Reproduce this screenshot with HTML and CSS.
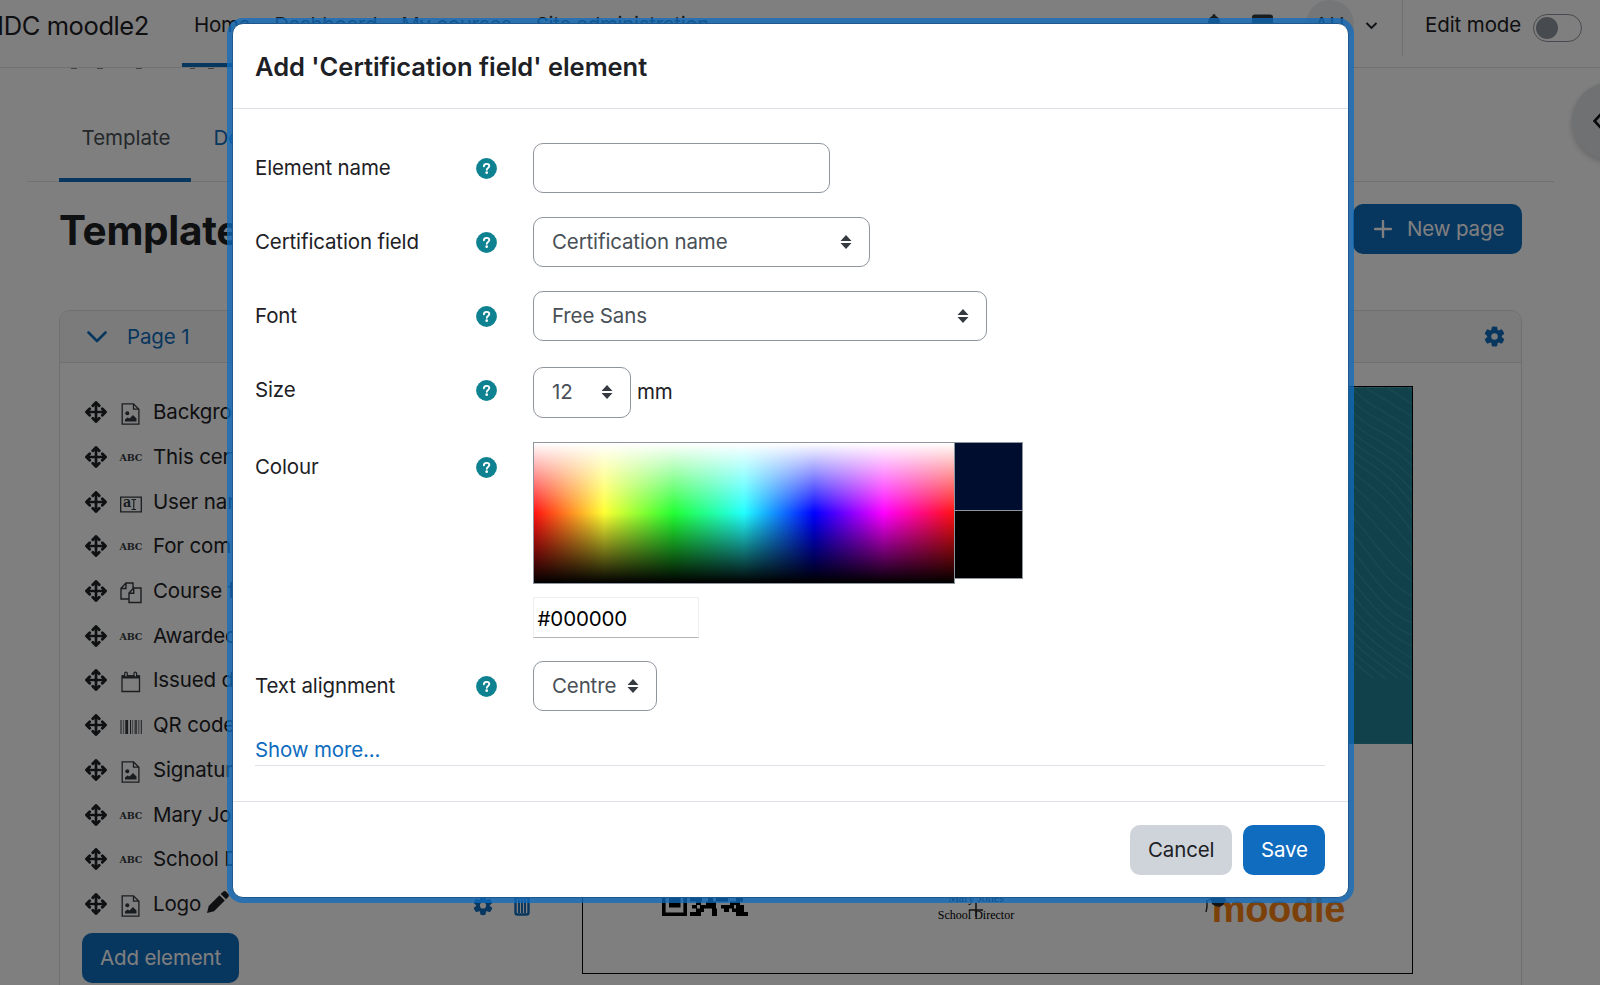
FILE: index.html
```html
<!DOCTYPE html>
<html lang="en">
<head>
<meta charset="utf-8">
<title>MDC moodle2</title>
<link rel="stylesheet" href="styles.css">
</head>
<body>
<svg class="defs" aria-hidden="true">
  <symbol id="move" viewBox="0 0 22 22"><path d="M11 3v16M3 11h16" fill="none" stroke="currentColor" stroke-width="2.7"/><path d="M7.8 4.7 11 1.5l3.200 3.200M7.800 17.300 11 20.500l3.200-3.200M4.700 7.800 1.500 11l3.200 3.200M17.300 7.800 20.500 11l-3.200 3.200" fill="none" stroke="currentColor" stroke-width="2.900" stroke-linecap="round" stroke-linejoin="round"/></symbol>
  <symbol id="image" viewBox="0 0 22 22"><path d="M2.200.800h11.300l5.400 5.400v15H2.200zM13.500.800v5.400h5.400" fill="none" stroke="currentColor" stroke-width="1.300"/><circle cx="7.300" cy="10.200" r="2" fill="currentColor"/><path d="M5 18.500v-2l2.500-2 2 1 3.500-3.500 3.500 3.500v3z" fill="currentColor"/></symbol>
  <symbol id="field" viewBox="0 0 22 22"><path d="M.700 4.200h20.600v14.600H.700z" fill="none" stroke="currentColor" stroke-width="1.300"/><path d="M11.500 6.500h4.500M11.500 16.500h4.500M13.800 6.500v10" fill="none" stroke="currentColor" stroke-width="1.200"/></symbol>
  <symbol id="copy" viewBox="0 0 22 22"><path d="M8.500 17H1V6.200L6 1h7v5M1 6.500h5V1M9 20.500V11l4.700-5H21v14.500zM9 11.200h4.700V6" fill="none" stroke="currentColor" stroke-width="1.400"/></symbol>
  <symbol id="calendar" viewBox="0 0 22 22"><path d="M2 5h17.500v15.500H2z" fill="none" stroke="currentColor" stroke-width="1.300"/><path d="M2 4.300h17.500v3.200H2z" fill="currentColor"/><rect x="4.700" y="1.200" width="2.600" height="4.800" rx="1.300" fill="#fff" stroke="currentColor" stroke-width="1.200"/><rect x="14" y="1.200" width="2.600" height="4.800" rx="1.300" fill="#fff" stroke="currentColor" stroke-width="1.200"/></symbol>
  <symbol id="barcode" viewBox="0 0 22 22"><path d="M1 4v14M10.500 4v14M21.300 4v14" stroke="currentColor" stroke-width="1"/><path d="M3.500 4v14M12.500 4v14M18.800 4v14" stroke="currentColor" stroke-width="1.300" opacity=".55"/><path d="M6.700 4v14" stroke="currentColor" stroke-width="2.800"/><path d="M15.800 4v14" stroke="currentColor" stroke-width="2.600" opacity=".7"/></symbol>
  <symbol id="cog" viewBox="0 0 22 22"><g fill="currentColor"><path fill-rule="evenodd" d="M11 3.500a7.500 7.500 0 1 1 0 15 7.500 7.500 0 0 1 0-15zm0 4.100a3.400 3.400 0 1 0 0 6.800 3.400 3.400 0 0 0 0-6.800z"/><path id="tooth" d="M8.300.700q2.700-.6 5.400 0l.8 4.200h-7z"/><use href="#tooth" transform="rotate(60 11 11)"/><use href="#tooth" transform="rotate(120 11 11)"/><use href="#tooth" transform="rotate(180 11 11)"/><use href="#tooth" transform="rotate(240 11 11)"/><use href="#tooth" transform="rotate(300 11 11)"/></g></symbol>
  <symbol id="sort" viewBox="0 0 12 14"><path d="M6 0l5.500 6H.5zM6 14l5.500-6H.5z" fill="#343a40"/></symbol>
  <symbol id="help" viewBox="0 0 21 21"><circle cx="10.500" cy="10.500" r="10.400" fill="#0f8291"/><path d="M7.900 8.300c.1-1.600 1.200-2.400 2.700-2.400s2.700.8 2.700 2.200c0 1.900-2.500 1.800-2.500 3.700" fill="none" stroke="#fff" stroke-width="1.900" stroke-linecap="round"/><circle cx="10.700" cy="14.700" r="1.350" fill="#fff"/></symbol>
</svg>

<div class="page">
  <header class="navbar">
    <div class="brand">MDC moodle2</div>
    <nav class="menu"><a class="current">Home</a><a>Dashboard</a><a>My courses</a><a>Site administration</a></nav>
    <div class="usertools">
      <svg class="bell" viewBox="0 0 20 24"><path d="M10 0c1 0 1.600.8 1.600 2 3 .8 4.400 3.300 4.400 7v6l2 3H2l2-3V9c0-3.700 1.400-6.200 4.400-7 0-1.200.6-2 1.600-2z" fill="#343a40"/></svg>
      <svg class="chat" viewBox="0 0 22 22"><rect width="22" height="17" rx="3" fill="#343a40"/></svg>
      <span class="avatar">AU</span>
      <svg class="caret" viewBox="0 0 12 8"><path d="M1 1l5 5 5-5" fill="none" stroke="#1d2125" stroke-width="1.800"/></svg>
    </div>
    <div class="editmode"><span>Edit mode</span><span class="switch"><i></i></span></div>
  </header>

  <svg class="scrolled" viewBox="0 0 160 2"><path d="M3 .400h6M29 .400h6M68 .400h6M122 .400h5M140 .400h6" stroke="#1d2125" stroke-width="1" opacity=".6"/></svg>
  <nav class="tabs"><a class="active">Template</a><a>Details</a></nav>
  <div class="titlebar">
    <h1>Template</h1>
    <button class="btn primary newpage"><svg viewBox="0 0 18 18"><path d="M9 1v16M1 9h16" stroke="#fff" stroke-width="2.400" stroke-linecap="round"/></svg>New page</button>
  </div>

  <section class="card">
    <div class="cardhead">
      <svg class="chev" viewBox="0 0 20 12"><path d="M1.500 1.500 10 10l8.500-8.500" fill="none" stroke="currentColor" stroke-width="2.600" stroke-linecap="round" stroke-linejoin="round"/></svg>
      <span>Page 1</span>
      <svg class="cog"><use href="#cog"/></svg>
    </div>
    <div class="cardbody">
      <div class="elements">
        <ul>
          <li><svg><use href="#move"/></svg><svg class="kind"><use href="#image"/></svg><span>Background</span></li>
          <li><svg><use href="#move"/></svg><b class="abc">ABC</b><span>This certifies</span></li>
          <li><svg><use href="#move"/></svg><span class="kindbox"><svg class="kind"><use href="#field"/></svg><b>a</b></span><span>User name</span></li>
          <li><svg><use href="#move"/></svg><b class="abc">ABC</b><span>For completing</span></li>
          <li><svg><use href="#move"/></svg><svg class="kind"><use href="#copy"/></svg><span>Course full</span></li>
          <li><svg><use href="#move"/></svg><b class="abc">ABC</b><span>Awarded on</span></li>
          <li><svg><use href="#move"/></svg><svg class="kind"><use href="#calendar"/></svg><span>Issued date</span></li>
          <li><svg><use href="#move"/></svg><svg class="kind"><use href="#barcode"/></svg><span>QR code</span></li>
          <li><svg><use href="#move"/></svg><svg class="kind"><use href="#image"/></svg><span>Signature</span></li>
          <li><svg><use href="#move"/></svg><b class="abc">ABC</b><span>Mary Jones</span></li>
          <li><svg><use href="#move"/></svg><b class="abc">ABC</b><span>School Director</span></li>
          <li><svg><use href="#move"/></svg><svg class="kind"><use href="#image"/></svg><span>Logo</span>
            <svg class="pencil" viewBox="0 0 22 22"><path d="M0 22l1.700-7L12.500 4.200l5.300 5.300L7 20.300zM13.700 3l2.400-2.300q1.500-1.200 3 0l2.200 2.200q1.200 1.500 0 3L19 8.300z" fill="#1d2125"/></svg>
            <span class="actions"><svg><use href="#cog"/></svg><svg class="trash" viewBox="0 0 16 20"><path d="M0 2h16M1.500 2v15q0 2 2 2h9q2 0 2-2V2" fill="none" stroke="currentColor" stroke-width="2.400"/><path d="M5 4v13.500M8 4v13.500M11 4v13.500" stroke="currentColor" stroke-width="1.900"/></svg></span></li>
        </ul>
        <button class="btn primary">Add element</button>
      </div>
      <div class="sheet">
        <svg class="art" viewBox="0 0 830 357">
          <rect width="830" height="357" fill="#228498"/>
          <g fill="none" stroke="#3791a0" stroke-width="1.400">
            <path d="M742-93q25 46 50 60t50 32"/><path d="M742-80q25 46 50 60t50 32"/><path d="M742-67q25 46 50 60t50 32"/><path d="M742-54q25 46 50 60t50 32"/><path d="M742-41q25 46 50 60t50 32"/><path d="M742-28q25 45 50 58t50 33"/><path d="M742-15q25 43 50 56t50 35"/><path d="M742-2q25 40 50 53t50 39"/><path d="M742 11q25 36 50 50t50 43"/><path d="M742 24q25 31 50 46t50 48"/><path d="M742 37q25 26 50 42t50 54"/><path d="M742 50q25 21 50 39t50 59"/><path d="M742 63q25 18 50 39t50 60"/><path d="M742 76q25 17 50 42t50 58"/><path d="M742 89q25 18 50 47t50 53"/><path d="M742 102q25 21 50 54t50 45"/><path d="M742 115q25 25 50 59t50 39"/><path d="M742 128q25 30 50 63t50 35"/><path d="M742 141q25 35 50 65t50 33"/><path d="M742 154q25 38 50 66t50 31"/><path d="M742 167q25 41 50 65t50 32"/><path d="M742 180q25 42 50 64t50 33"/><path d="M742 193q25 42 50 62t50 35"/><path d="M742 206q25 40 50 59t50 38"/><path d="M742 219q25 36 50 54t50 42"/><path d="M742 232q25 32 50 51t50 46"/><path d="M742 245q25 27 50 47"/><path d="M742 258q17 17 31 34"/>
          </g>
          <rect y="292" width="830" height="65" fill="#228498"/>
        </svg>
        <div class="signrow">
          <svg class="qr" viewBox="0 0 86 86"><path d="M1.800 62v22.200h21.400V62" fill="none" stroke="#000" stroke-width="3.600"/><path d="M7 66h11.500v11.500H7zM30 64.500h6V68h-6zM40 64.500h6V68h-6zM52 64.500h6V68h-6zM62 64.500h8V68h-8zM76 64.500h10V68H76zM28 68h12v3.500H28zM46 68h5v3.500h-5zM54 68h12v3.500H54zM74 68h7v3.500h-7zM34 71.500h5V75h-5zM44 71.500h10V75H44zM68 71.500h10V75H68zM30 75h5v3.500h-5zM38 75h16v3.500H38zM59 75h13v3.500H59zM74 75h8v3.500h-8zM34 78.500h8V82h-8zM50 78.500h5V82h-5zM62 78.500h5V82h-5zM70 78.500h12V82H70zM28 82h11v4H28zM50 82h5v4h-5zM74 82h12v4H74z"/></svg>
          <div class="signature"><span>Mary Jones</span><span>School Director</span><svg viewBox="0 0 14 14"><path d="M7 0v14M0 7h14" stroke="#222" stroke-width="1.500"/></svg></div>
          <div class="logo"><span>moodle</span><svg viewBox="0 0 24 30"><path d="M1 12 18 2l3 9-3 5q-5 4-11-1l-1-4z" fill="#282828"/><path d="M2 11v7l-1 5" fill="none" stroke="#282828" stroke-width="1.400"/></svg></div>
        </div>
      </div>
    </div>
  </section>
  <div class="drawer"><svg viewBox="0 0 10 18"><path d="M9 1 1.500 9 9 17" fill="none" stroke="#111" stroke-width="2.600"/></svg></div>
</div>

<div class="backdrop">
  <div class="modal">
    <div class="modalhead"><h2>Add 'Certification field' element</h2></div>
    <div class="modalbody">
      <div class="row"><label>Element name</label><svg class="help"><use href="#help"/></svg><div class="control w-name"></div></div>
      <div class="row"><label>Certification field</label><svg class="help"><use href="#help"/></svg><div class="control w-field"><span>Certification name</span><svg><use href="#sort"/></svg></div></div>
      <div class="row"><label>Font</label><svg class="help"><use href="#help"/></svg><div class="control w-font"><span>Free Sans</span><svg><use href="#sort"/></svg></div></div>
      <div class="row size"><label>Size</label><svg class="help"><use href="#help"/></svg><div class="control w-size"><span>12</span><svg><use href="#sort"/></svg></div><span class="unit">mm</span></div>
      <div class="row colour"><label>Colour</label><svg class="help"><use href="#help"/></svg>
        <div class="picker">
          <div class="swatches"><div class="spectrum"></div><div class="preview"><i class="hover"></i><i class="chosen"></i></div></div>
          <div class="hex">#000000</div>
        </div>
      </div>
      <div class="row"><label>Text alignment</label><svg class="help"><use href="#help"/></svg><div class="control w-align"><span>Centre</span><svg><use href="#sort"/></svg></div></div>
      <div class="more"><a>Show more...</a></div>
    </div>
    <div class="modalfoot"><button class="btn secondary">Cancel</button><button class="btn primary">Save</button></div>
  </div>
</div>
</body>
</html>
```
FILE: styles.css
```css
* { box-sizing: border-box; }
body {
  margin: 0; width: 1600px; height: 985px; overflow: hidden; background: #fff;
  font: 20.5px/30px Inter, "Liberation Sans", sans-serif; letter-spacing: -.14px; color: #1d2125;
}
svg { display: block; flex: none; }
.defs { position: absolute; width: 0; height: 0; }
.page { position: relative; height: 985px; overflow: hidden; }

.navbar { display: flex; height: 68px; border-bottom: 1.500px solid #dee2e6; }
.brand { display: flex; justify-content: flex-end; width: 182px; margin-left: -14px; padding-right: 19px; font-size: 25.500px; line-height: 52px; white-space: nowrap; letter-spacing: -.4px; }
.menu { display: flex; margin-left: 14px; line-height: 50px; white-space: nowrap; color: #343a40; }
.menu a { height: 67px; padding: 0 12px; letter-spacing: -.3px; }
.menu .current { color: #1d2125; border-bottom: 4px solid #0f6cbf; }
.usertools { display: flex; margin-left: auto; width: 200px; align-items: flex-start; }
.bell { width: 20px; height: 24px; margin: 14px 0 0 2px; }
.chat { width: 21px; height: 22px; margin: 14px 0 0 28px; }
.avatar { width: 48px; height: 48px; margin-left: 33px; border-radius: 50%; background: #e9ecef; text-align: center; line-height: 49px; color: #343a40; letter-spacing: 1px; }
.caret { width: 13px; height: 8px; margin: 22px 0 0 11px; }
.editmode { display: flex; align-items: flex-start; width: 198px; height: 56px; padding-left: 22px; border-left: 1.500px solid #dee2e6; line-height: 50px; white-space: nowrap; }
.editmode > span:first-child { width: 108px; letter-spacing: -.1px; }
.switch { width: 49px; height: 28px; margin-top: 14px; padding: 2px; border: 1.500px solid #8f959e; border-radius: 14px; }
.switch i { display: block; width: 22px; height: 22px; border-radius: 50%; background: #8f959e; }

.scrolled { width: 160px; height: 2px; margin-left: 68px; }
.tabs { display: flex; margin: 0 46px 0 27px; height: 112px; padding-left: 32px; border-bottom: 1.500px solid #dee2e6; line-height: 135px; color: #0f6cbf; }
.tabs a { width: 132px; height: 112px; padding-left: 22.500px; }
.tabs .active { color: #495057; border-bottom: 4px solid #0f6cbf; letter-spacing: 0; }
.titlebar { display: flex; justify-content: space-between; margin: 22px 78px 0 59px; height: 106px; }
h1 { margin: 0; font-size: 40.500px; line-height: 53px; font-weight: 700; letter-spacing: -.3px; }
.btn { height: 50px; border: 0; border-radius: 10px; padding: 0 18px; font: inherit; letter-spacing: inherit; white-space: nowrap; }
.primary { background: #0f6cbf; color: #fff; }
.secondary { background: #ced4da; color: #1d2125; }
.newpage { display: flex; align-items: center; gap: 15px; width: 169px; padding-left: 21px; }
.newpage svg { width: 18px; height: 18px; }

.card { margin: 0 78px 0 59px; height: 700px; border: 1.500px solid #dfdfdf; border-radius: 11px 11px 0 0; }
.cardhead { display: flex; align-items: center; height: 52px; padding: 0 16px 0 27px; background: #f7f7f7; border-bottom: 1.500px solid #dfdfdf; border-radius: 10px 10px 0 0; color: #0f6cbf; }
.chev { width: 20px; height: 12px; }
.cardhead span { margin-left: 20px; }
.cog { width: 21px; height: 21px; margin-left: auto; }
.cardbody { display: flex; padding-top: 23px; }
.elements { width: 522px; padding: 4px 0 0 22px; }
ul { list-style: none; margin: 0 0 7px; padding: 0; }
li { display: flex; align-items: center; height: 44.700px; padding-left: 2.500px; white-space: nowrap; }
li > svg:first-child { width: 22px; height: 22px; margin-right: 13px; }
.kind { width: 22px; height: 22px; margin: 4px 11.500px 0 0; color: #343a40; }
.kindbox { position: relative; }
.kindbox b { position: absolute; left: 3px; top: 0; font: 700 15px/26px "DejaVu Serif", serif; color: #343a40; transform: scaleX(.85); transform-origin: left; }
.abc { width: 22px; margin: 2px 11.500px 0 0; font: 700 9.500px/20px "DejaVu Serif", serif; letter-spacing: -.2px; color: #343a40; }
.pencil { width: 22px; height: 22px; margin: -3px 0 0 6px; }
.actions { display: flex; gap: 21px; margin: 0 35px 0 auto; padding: 3px 17px 0 0; color: #0f6cbf; }
.actions svg { width: 20px; height: 21px; }
.actions .trash { width: 16px; }
.sheet { display: flex; flex-direction: column; width: 831px; height: 588px; border: 1.500px solid #000; }
.art { width: 829px; height: 357px; }
.signrow { display: flex; padding: 86px 67px 0 79px; }
.qr { width: 86px; height: 86px; }
.signature { position: relative; display: flex; flex-direction: column; align-items: center; width: 76px; margin-left: 190px; padding-top: 60px; font: 12px/17px "Liberation Serif", serif; letter-spacing: 0; color: #000; white-space: nowrap; }
.signature svg { position: absolute; left: 31px; top: 73px; width: 14px; height: 14px; }
.logo { position: relative; margin: 56px 0 0 auto; height: 46px; font: 700 38px/46px "Liberation Sans", sans-serif; letter-spacing: -.3px; color: #f98012; }
.logo svg { position: absolute; left: -7px; top: 3px; width: 24px; height: 30px; }
.drawer { position: absolute; left: 1572px; top: 82px; width: 78px; height: 78px; padding: 30px 0 0 21px; border-radius: 50%; background: #dee2e6; box-shadow: 0 3px 6px rgba(0,0,0,.2); }
.drawer svg { width: 10px; height: 18px; }

.backdrop { position: absolute; top: 0; left: 0; width: 1600px; height: 985px; padding: 23px 0 0 232px; background: rgba(0,0,0,.5); }
.modal { width: 1117px; height: 875px; border: 1px solid #20588c; border-radius: 11px; background: #fff; box-shadow: 0 0 0 5px rgba(15,108,191,.75); }
.modalhead { height: 85px; padding: 0 22px; border-bottom: 1.500px solid #dee2e6; }
h2 { margin: 0; font-size: 25.500px; line-height: 85px; font-weight: 600; letter-spacing: -.03px; }
.modalbody { height: 693px; padding: 33.500px 23px 0 22px; border-bottom: 1.500px solid #dee2e6; }
.row { display: flex; height: 50px; margin-bottom: 24.200px; }
label { width: 221px; line-height: 50px; white-space: nowrap; }
.help { width: 21px; height: 21px; margin: 15px 36px 0 0; }
.control { display: flex; align-items: center; justify-content: space-between; height: 50.500px; padding: 0 17px 0 18px; border: 1.500px solid #8f959e; border-radius: 10px; color: #495057; white-space: nowrap; }
.control svg { width: 12px; height: 14px; }
.w-name { width: 297px; }
.w-field { width: 337px; }
.w-font { width: 454px; }
.w-size { width: 98px; }
.w-align { width: 124px; }
.size { margin-bottom: 26.900px; }
.size .control { margin-top: 2px; }
.unit { margin-left: 6px; line-height: 54px; }
.colour { height: 194.500px; }
.swatches { display: flex; align-items: flex-start; }
.spectrum {
  width: 422px; height: 142px; border: 1.500px solid #8f959e;
  background:
    linear-gradient(to bottom, #fff 0%, rgba(255,255,255,0) 50%, rgba(0,0,0,0) 50%, #000 100%),
    linear-gradient(to right, #f11 0%, #ff3 16.700%, #2f3 33.300%, #2ff 50%, #00f 66.700%, #f0f 83.300%, #f11 100%);
}
.preview { width: 69px; margin-left: -1px; border: 1.500px solid #8f959e; }
.preview i { display: block; height: 67px; background: #000; }
.preview .hover { height: 68px; background: #000d2e; border-bottom: 1.500px solid #8f959e; }
.hex { width: 166px; height: 41px; margin-top: 13px; padding-left: 3.500px; line-height: 41px; border: 1px solid #eee; border-bottom: 1.500px solid #b5b5b5; color: #000; }
.more { height: 31px; border-bottom: 1.500px solid #dee2e6; color: #0f6cbf; }
.modalfoot { display: flex; justify-content: flex-end; gap: 11px; padding: 22.500px 23px 0 22px; }
.modalfoot .btn:first-child { width: 102px; }
.modalfoot .btn:last-child { width: 82px; }
```
